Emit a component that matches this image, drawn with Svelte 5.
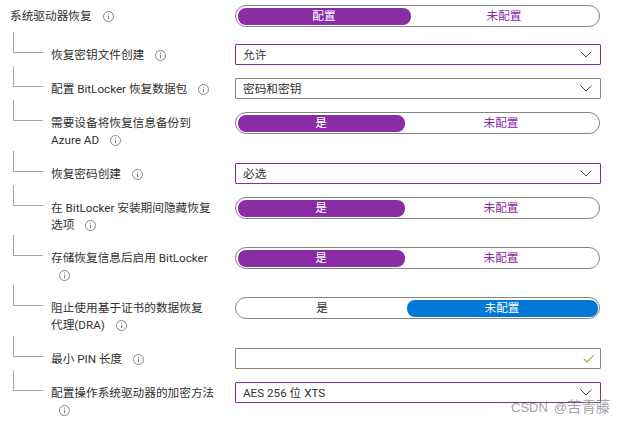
<script>
  const rows = [
    { label: '系统驱动器恢复', type: 'toggle', left: '配置', right: '未配置', size: 'wide', top: true, on: 'left' },
    { label: '恢复密钥文件创建', type: 'select', value: '允许', active: true },
    { label: '配置 BitLocker 恢复数据包', type: 'select', value: '密码和密钥' },
    { label: '需要设备将恢复信息备份到\nAzure AD', type: 'toggle', left: '是', right: '未配置', on: 'left', tall: true },
    { label: '恢复密码创建', type: 'select', value: '必选', active: true },
    { label: '在 BitLocker 安装期间隐藏恢复\n选项', type: 'toggle', left: '是', right: '未配置', on: 'left', snug: true },
    { label: '存储恢复信息后启用 BitLocker', type: 'toggle', left: '是', right: '未配置', on: 'left', snug: true, iconBreak: true },
    { label: '阻止使用基于证书的数据恢复\n代理(DRA)', type: 'toggle', left: '是', right: '未配置', on: 'right', tall: true },
    { label: '最小 PIN 长度', type: 'input' },
    { label: '配置操作系统驱动器的加密方法', type: 'select', value: 'AES 256 位 XTS', active: true, iconBreak: true }
  ];
</script>

<main class="page">
  {#each rows as row}
    <section class="row" class:tall={row.tall} class:snug={row.snug} class:top={row.top}>
      {#if !row.top}<span class="elbow"></span>{/if}
      <div class="label" class:toplabel={row.top}>
        {row.label}
        {#if row.iconBreak}<br />{/if}
        <svg class="info" viewBox="0 0 11 11" width="11" height="11">
          <circle cx="5.5" cy="5.5" r="5" fill="none" stroke="#7a7a7a" stroke-width="0.9" />
          <path d="M5.5 4.8V8.3M5.5 2.7V3.7" stroke="#6f6f6f" stroke-width="0.9" fill="none" />
        </svg>
      </div>
      <div class="control">
        {#if row.type === 'toggle'}
          <div class="toggle" class:wide={row.size === 'wide'} class:right={row.on === 'right'}>
            <span class="opt a">{row.left}</span>
            <span class="opt b">{row.right}</span>
          </div>
        {:else if row.type === 'select'}
          <div class="field" class:active={row.active}>
            <span class="value">{row.value}</span>
            <svg viewBox="0 0 12 7" width="12" height="7">
              <path d="M0.7 0.7L6 6L11.3 0.7" fill="none" stroke="#4a4a4a" stroke-width="1" />
            </svg>
          </div>
        {:else}
          <div class="field check">
            <svg viewBox="0 0 12 9" width="12" height="9">
              <path d="M0.8 4.8L4 8L11.2 0.8" fill="none" stroke="#7fba4a" stroke-width="1.2" />
            </svg>
          </div>
        {/if}
      </div>
    </section>
  {/each}
  <div class="mark">CSDN @<span class="cjk">苦青藤</span></div>
</main>

<style>
  :global(body) {
    margin: 0;
    background: #fff;
  }
  .page {
    position: relative;
    width: 626px;
    height: 422px;
    box-sizing: border-box;
    padding: 5px 0 0 13px;
    overflow: hidden;
    font: 11.67px/17px Roboto, "Noto Sans CJK SC", sans-serif;
    color: #323130;
  }
  .row {
    display: flex;
    height: 34px;
  }
  .row.top {
    height: 39px;
    margin-left: -3px;
  }
  .row.tall {
    height: 51px;
  }
  .row.snug {
    height: 50px;
  }
  .elbow {
    flex: none;
    width: 30px;
    height: 21px;
    margin-top: -12px;
    box-sizing: border-box;
    border-left: 1px solid #a6a6a6;
    border-bottom: 1px solid #a6a6a6;
  }
  .label {
    width: 184px;
    margin-left: 8px;
    flex: none;
    padding-top: 3px;
    white-space: pre-line;
  }
  .label.toplabel {
    margin-left: 0;
    width: 225px;
  }
  .info {
    vertical-align: -2px;
    margin-left: 8px;
  }
  .control {
    width: 366px;
    flex: none;
  }
  .toggle {
    display: flex;
    box-sizing: border-box;
    width: 365px;
    height: 22px;
    padding: 1.5px;
    border: 1.5px solid #858585;
    border-radius: 11px;
    text-align: center;
    line-height: 16px;
    color: #8a2da5;
  }
  .opt {
    border-radius: 8px;
  }
  .opt.a {
    width: 167px;
    background: #8a2da5;
    color: #fff;
  }
  .opt.b {
    flex: 1;
  }
  .wide .opt.a {
    width: 173px;
  }
  .right .opt.a {
    width: 169px;
    background: none;
    color: #323130;
  }
  .right .opt.b {
    background: #0078d4;
    color: #fff;
  }
  .field {
    display: flex;
    align-items: center;
    justify-content: space-between;
    box-sizing: border-box;
    width: 366px;
    height: 21px;
    padding: 0 8px 0 7px;
    border: 1px solid #858585;
    border-radius: 1px;
  }
  .value {
    padding-top: 1px;
  }
  .field.active {
    border-color: #8a2da5;
  }
  .field.check {
    justify-content: flex-end;
    padding-right: 5px;
  }
  .mark {
    position: absolute;
    left: 511px;
    top: 398px;
    font: 13px/18px "Liberation Sans", "Noto Sans CJK SC", sans-serif;
    word-spacing: 2.4px;
    color: rgba(130, 130, 130, 0.75);
    white-space: nowrap;
  }
  .cjk {
    font-size: 14.4px;
  }
</style>
